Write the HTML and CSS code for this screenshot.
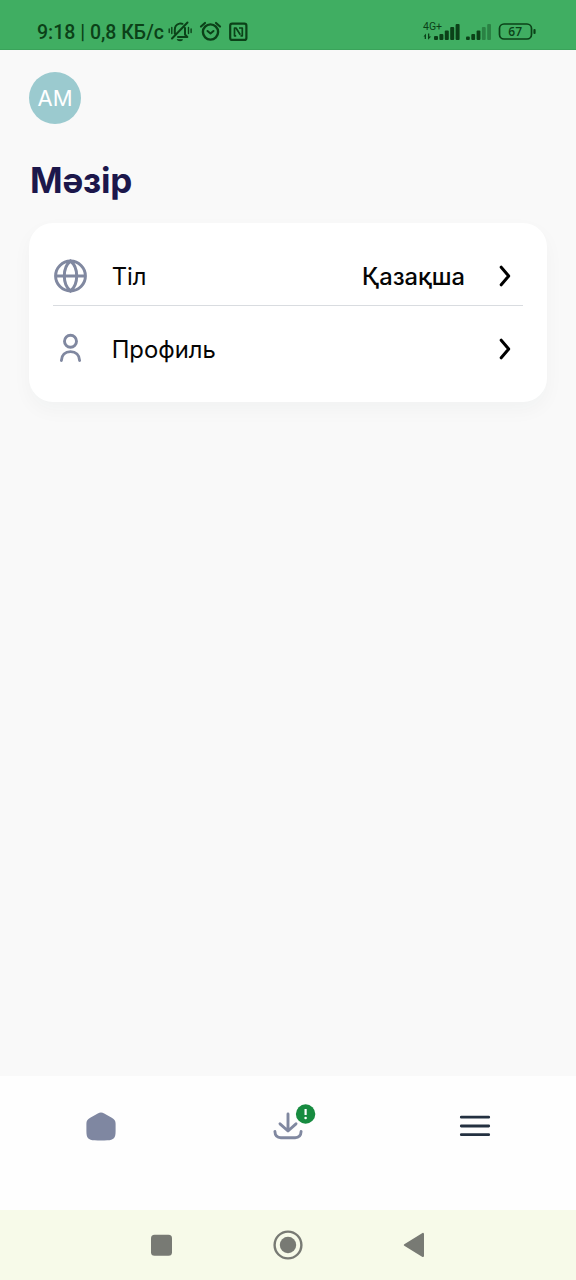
FILE: index.html
```html
<!DOCTYPE html>
<html lang="kk">
<head>
<meta charset="utf-8">
<meta name="viewport" content="width=device-width, initial-scale=1">
<title>Мәзір</title>
<link rel="stylesheet" href="styles.css">
</head>
<body>
<header class="status">
  <span class="status-text">9:18 | 0,8 КБ/с</span>
  <svg class="status-icons" width="82" height="24" viewBox="168 20 82 24" fill="none" stroke="#0b4118" stroke-width="2" stroke-linecap="round" stroke-linejoin="round">
    <path d="M172 38.500 187.500 22.500M174.800 33.500v-4c0-3 1.900-5.200 4.500-5.900 1.300-.4 2.300-.2 3.200.2M178 37h9.300l-2.300-2.500v-6.500"/>
    <path d="M177.500 39.800h5c-.8 1.300-4.200 1.300-5 0Z" fill="#0b4118" stroke-width="1"/>
    <path d="M169.200 29v3.500M171.800 27.500v6M188.500 27.500v6M191.100 29v3.500" stroke-width="1.400"/>
    <circle cx="210.500" cy="32" r="7.600" stroke-width="2.400"/>
    <path d="m201 26.500 4-3.500M220 26.500l-4-3.500" stroke-width="2.200"/>
    <path d="m207.500 31 3 2.500 3-2.500" stroke-width="2"/>
    <rect x="230.200" y="23.700" width="16.200" height="16.200" rx="2" stroke-width="2.200"/>
    <path d="M236.200 35.800H234.500V28h1.500l4.300 6.800M239 28h3.300v7.800h-1.800" stroke-width="1.700" stroke-linecap="butt"/>
  </svg>
  <svg class="signal" width="70" height="22" viewBox="423 20 70 22" fill="#0b4118">
    <text class="network" x="423" y="30">4G+</text>
    <path d="m423.500 36.500 2.500-3v5.500h-1.300v-2.500ZM428 33.500h1.300v3h1.900L428 39.800Z"/>
    <rect x="434" y="36" width="4" height="4" rx="1"/><rect x="439.400" y="34" width="4" height="6" rx="1"/><rect x="444.800" y="30.500" width="4" height="9.500" rx="1"/><rect x="450.200" y="27" width="4" height="13" rx="1"/><rect x="455.600" y="24" width="4" height="16" rx="1"/>
    <rect x="466" y="36.500" width="3.800" height="3.500" rx="1"/><rect x="471.300" y="34" width="3.800" height="6" rx="1"/><rect x="476.600" y="30.500" width="3.800" height="9.500" rx="1"/>
    <g opacity=".4"><rect x="481.900" y="27" width="3.800" height="13" rx="1"/><rect x="487.200" y="24" width="3.800" height="16" rx="1"/></g>
  </svg>
  <svg class="battery" width="38" height="20" viewBox="498 22 38 20">
    <rect x="499.500" y="24" width="32" height="15" rx="4.500" fill="none" stroke="#0b4118" stroke-width="1.700"/>
    <rect x="533.400" y="29" width="2.200" height="5" rx="1" fill="#0b4118"/>
    <text class="charge" x="515.200" y="36.300" text-anchor="middle">67</text>
  </svg>
</header>

<main class="page">
  <div class="avatar">АМ</div>
  <h1 class="title">Мәзір</h1>
  <section class="card">
    <div class="row row-language">
      <svg class="row-icon" width="34" height="34" viewBox="0 0 34 34" fill="none" stroke="#8088a0" stroke-width="3"><circle cx="17.500" cy="17" r="14.900"/><path d="M2.500 17h30"/><path d="M17.500 2c-4 3.200-6.200 8.700-6.200 15s2.200 11.800 6.200 15c4-3.200 6.200-8.700 6.200-15S21.500 5.200 17.500 2Z"/></svg>
      <span class="label">Тіл</span>
      <span class="value">Қазақша</span>
      <svg class="chevron" width="14" height="22" viewBox="0 0 14 22"><path d="m3.200 2.200 7.500 8.800-7.500 8.800"/></svg>
    </div>
    <div class="row row-profile">
      <svg class="row-icon" width="34" height="34" viewBox="0 0 34 34" fill="none" stroke="#8088a0" stroke-width="2.900" stroke-linecap="round"><circle cx="17.500" cy="9.300" r="6"/><path d="M8.400 28.500c.2-5.400 3.800-8.900 9.100-8.900s8.900 3.500 9.100 8.900"/></svg>
      <span class="label">Профиль</span>
      <svg class="chevron" width="14" height="22" viewBox="0 0 14 22"><path d="m3.200 2.200 7.500 8.800-7.500 8.800"/></svg>
    </div>
  </section>
</main>

<nav class="tabs">
  <div class="tab tab-home">
    <svg width="32" height="32" viewBox="0 0 32 32"><path d="M12.800 2.500q3.200-2 6.400 0l7.600 4.200c2.700 1.400 3.800 3.200 3.800 6v7.500c0 6.500-1.800 9-8.300 9-4.200.5-8.400.5-12.600 0-6.500 0-8.300-2.500-8.300-9v-7.500c0-2.800 1.100-4.600 3.800-6Z" fill="#7f87a1"/></svg>
  </div>
  <div class="tab tab-download">
    <svg width="44" height="38" viewBox="272 1103 44 38" fill="none" stroke="#8088a0" stroke-width="2.900" stroke-linecap="round" stroke-linejoin="round">
      <path d="M288 1114v16.500M280 1123.800l8 7.200 8-7.200M274.900 1131.500c.2 4.300 2.200 6.200 6 6.200h14.200c3.800 0 5.800-1.900 6-6.200"/>
      <circle cx="305.600" cy="1114" r="9.700" fill="#178b40" stroke="none"/>
      <path d="M305.600 1109v6" stroke="#fff" stroke-width="2.200" stroke-linecap="butt"/>
      <circle cx="305.600" cy="1118" r="1.300" fill="#fff" stroke="none"/>
    </svg>
  </div>
  <div class="tab tab-menu">
    <svg width="32" height="26" viewBox="0 0 32 26" stroke="#233040" stroke-width="2.800" stroke-linecap="round"><path d="M2.300 4.200h27.400M2.300 13h27.400M2.300 21.700h27.400"/></svg>
  </div>
</nav>

<footer class="system">
  <svg width="22" height="22" viewBox="0 0 22 22"><rect x="1" y=".7" width="21" height="21" rx="3.500" fill="#787a74"/></svg>
  <svg width="30" height="30" viewBox="0 0 30 30"><circle cx="15" cy="15" r="13.400" fill="none" stroke="#787a74" stroke-width="2.400"/><circle cx="15" cy="15" r="8.200" fill="#787a74"/></svg>
  <svg width="22" height="26" viewBox="0 0 22 26"><path d="M1.800 13 20 1.900V24.100Z" fill="#787a74" stroke="#787a74" stroke-width="2" stroke-linejoin="round"/></svg>
</footer>
</body>
</html>
```
FILE: styles.css
```css
* { box-sizing: border-box; }
body {
  margin: 0;
  height: 1280px;
  display: flex;
  flex-direction: column;
  background: #f9f9f9;
  font-family: Inter, "Noto Sans", sans-serif;
  color: #050505;
}
svg { display: block; flex: none; }

.status {
  height: 50px;
  padding: 12px 0 0 37px;
  display: flex;
  align-items: flex-start;
  background: #40ae62;
  border-bottom: 1px solid #3aa35a;
}
.status-text {
  width: 131px;
  padding-top: 9px;
  font: 500 19.5px/24px Roboto, sans-serif;
  white-space: nowrap;
  color: #0b4118;
}
.status-icons { margin-top: 8px; }
.signal { margin: 8px 0 0 173px; }
.battery { margin: 10px 0 0 5px; }
.network { font: 400 10.5px Roboto, sans-serif; }
.charge { font: 600 12px "Open Sans", sans-serif; fill: #0b4118; }

.page { flex: 1; padding: 22px 29px 0; }
.avatar {
  width: 52px;
  height: 52px;
  border-radius: 50%;
  background: #9bcacf;
  color: #fff;
  font-size: 22px;
  line-height: 53px;
  text-align: center;
}
.title {
  margin: 34px 0 0 1px;
  font-size: 35px;
  line-height: 44px;
  font-weight: 650;
  letter-spacing: -.2px;
  color: #1c174b;
}
.card {
  height: 179px;
  margin-top: 21px;
  padding: 16px 24px 0;
  border-radius: 24px;
  background: #fff;
  box-shadow: 0 8px 20px rgba(30, 70, 50, .035);
}
.row { display: flex; align-items: center; padding-right: 11px; }
.row-language { height: 67px; padding-top: 8px; border-bottom: 1px solid #d9dce0; }
.row-profile { height: 86px; }
.label { margin-left: 24.7px; padding-top: 2px; font-size: 23.8px; line-height: 30px; }
.value {
  margin: 0 33px 0 auto;
  padding-top: 2px;
  font-size: 23.7px;
  line-height: 30px;
  font-weight: 500;
}
.chevron { fill: none; stroke: #000; stroke-width: 3; stroke-linecap: round; stroke-linejoin: round; }
.row-profile .chevron { margin-left: auto; }

.tabs {
  height: 134px;
  padding-top: 27px;
  display: grid;
  grid-template-columns: 202px 1fr 202px;
  justify-items: center;
  background: #fefefe;
}
.tab { height: 48px; display: flex; align-items: center; }
.tab-download { padding: 0 0 10px 12px; }
.tab-menu { padding-bottom: 2px; }

.system {
  height: 70px;
  padding: 0 151px 0 150px;
  display: flex;
  align-items: center;
  justify-content: space-between;
  background: #f7fae9;
}
```
